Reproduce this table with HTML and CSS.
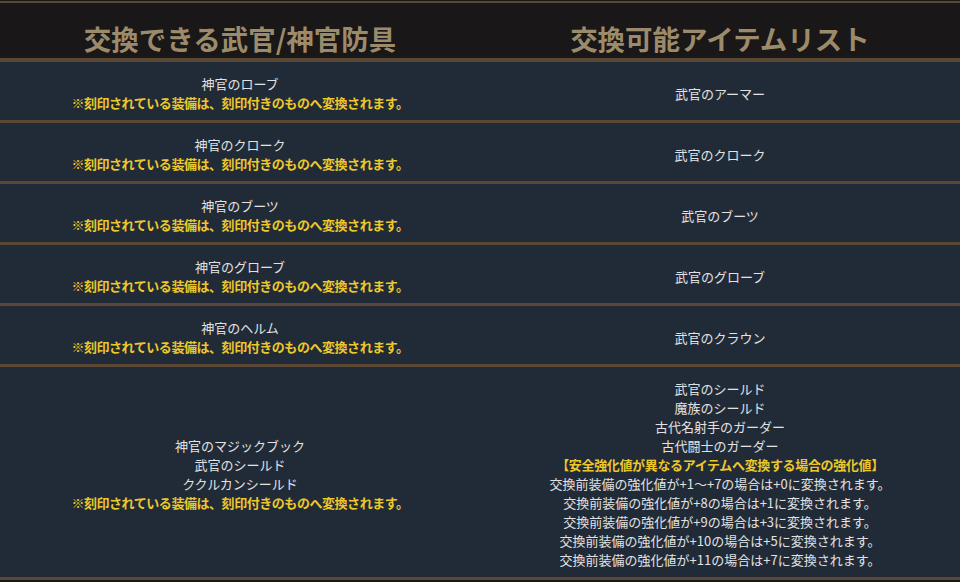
FILE: index.html
```html
<!DOCTYPE html>
<html lang="ja">
<head>
<meta charset="utf-8">
<link rel="stylesheet" href="styles.css">
</head>
<body>
<div class="page">
<table class="exchange">
  <thead>
    <tr>
      <th>交換できる武官/神官防具</th>
      <th>交換可能アイテムリスト</th>
    </tr>
  </thead>
  <tbody>
    <tr>
      <td>神官のローブ<br><span class="note">※刻印されている装備は、刻印付きのものへ変換されます。</span></td>
      <td>武官のアーマー</td>
    </tr>
    <tr>
      <td>神官のクローク<br><span class="note">※刻印されている装備は、刻印付きのものへ変換されます。</span></td>
      <td>武官のクローク</td>
    </tr>
    <tr>
      <td>神官のブーツ<br><span class="note">※刻印されている装備は、刻印付きのものへ変換されます。</span></td>
      <td>武官のブーツ</td>
    </tr>
    <tr>
      <td>神官のグローブ<br><span class="note">※刻印されている装備は、刻印付きのものへ変換されます。</span></td>
      <td>武官のグローブ</td>
    </tr>
    <tr>
      <td>神官のヘルム<br><span class="note">※刻印されている装備は、刻印付きのものへ変換されます。</span></td>
      <td>武官のクラウン</td>
    </tr>
    <tr>
      <td>神官のマジックブック<br>武官のシールド<br>ククルカンシールド<br><span class="note">※刻印されている装備は、刻印付きのものへ変換されます。</span></td>
      <td>武官のシールド<br>魔族のシールド<br>古代名射手のガーダー<br>古代闘士のガーダー<br><span class="note note-wide">【安全強化値が異なるアイテムへ変換する場合の強化値】</span><br>交換前装備の強化値が+1～+7の場合は+0に変換されます。<br>交換前装備の強化値が+8の場合は+1に変換されます。<br>交換前装備の強化値が+9の場合は+3に変換されます。<br>交換前装備の強化値が+10の場合は+5に変換されます。<br>交換前装備の強化値が+11の場合は+7に変換されます。</td>
    </tr>
  </tbody>
</table>
</div>
</body>
</html>
```

FILE: styles.css
```css
html, body {
  margin: 0;
  padding: 0;
  background: #191717;
}
.page {
  padding-top: 1px;
  width: 960px;
}
.exchange {
  width: 960px;
  border-collapse: collapse;
  table-layout: fixed;
  font-family: "Noto Sans CJK JP", "Noto Sans", sans-serif;
}
.exchange th {
  background: #191717;
  color: #9c8b6b;
  font-size: 27.5px;
  font-weight: 700;
  line-height: 32px;
  height: 55px;
  box-sizing: border-box;
  padding: 19px 0 4px;
  text-align: center;
  border-top: 2px solid #5a4834;
  border-bottom: 4px solid #5a4834;
}
.exchange td {
  background: #212b38;
  color: #e2e2e2;
  font-size: 13px;
  line-height: 19px;
  padding: 12px 0 8px;
  text-align: center;
  vertical-align: middle;
  border-bottom: 3px solid #5a4834;
}
.note {
  color: #ecc82a;
  font-weight: 700;
  letter-spacing: -0.45px;
}
.note-wide {
  letter-spacing: -0.35px;
}
```
